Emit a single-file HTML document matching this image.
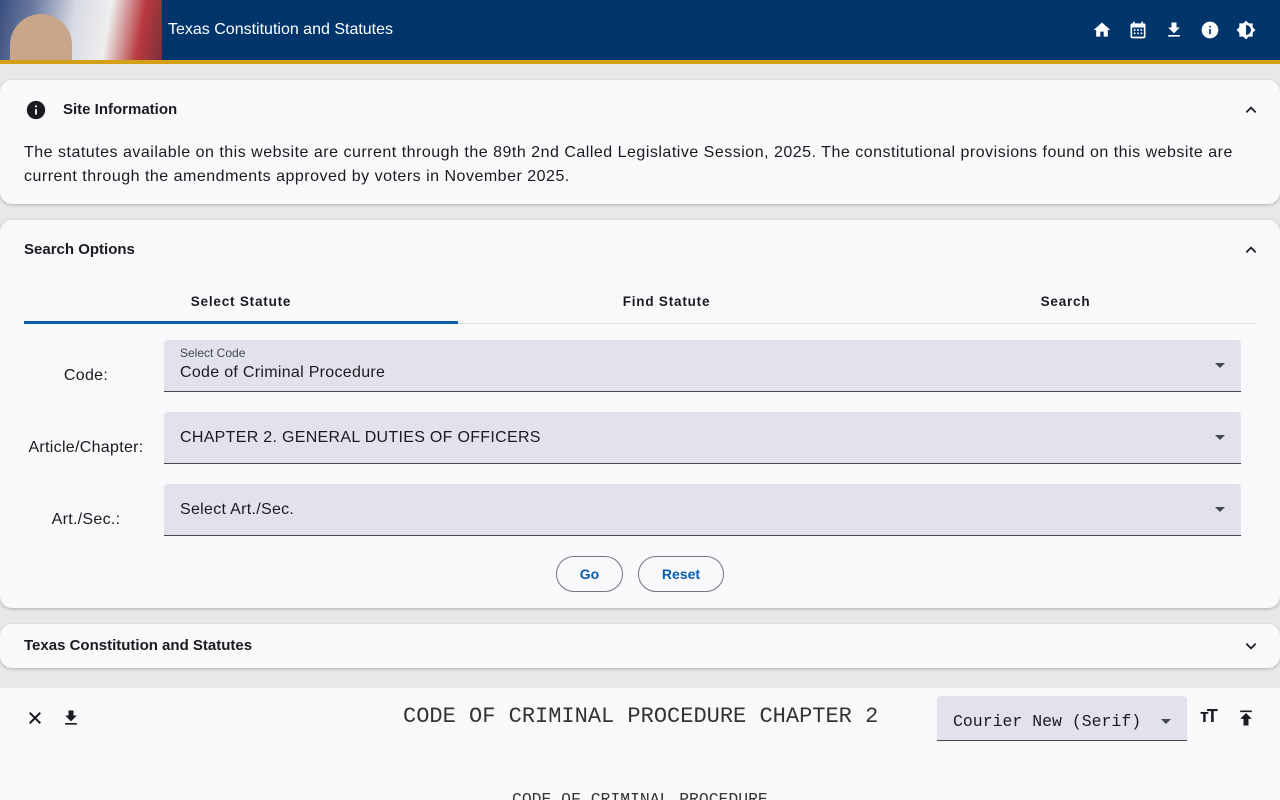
<!DOCTYPE html>
<html><head><meta charset="utf-8"><style>
*{box-sizing:border-box;margin:0;padding:0}
html,body{width:1280px;height:800px;overflow:hidden}
body{background:#e8e8ea;font-family:"Liberation Sans",sans-serif;color:#1b1b1f;position:relative}
.hdr{position:absolute;left:0;top:0;width:1280px;height:60px;background:#00356b}
.gold{position:absolute;left:0;top:60px;width:1280px;height:4px;background:#d4a017}
.logo{position:absolute;left:0;top:0;width:162px;height:60px;background:linear-gradient(100deg,#3a4f7f 0%,#6b7aa0 20%,#d9dbe4 45%,#eeeeee 65%,#b93a3f 85%,#7a2f3a 100%)}
.dome{position:absolute;left:10px;top:14px;width:62px;height:46px;background:#c9a58a;border-radius:31px 31px 0 0}
.title{position:absolute;left:168px;top:21px;color:#fff;font-size:16px}
.icons{position:absolute;top:20px;right:24px;display:flex;gap:16px}
.icons svg{width:20px;height:20px;fill:#fff}
.card{position:absolute;left:0;width:1280px;background:#f9f9fc;border-radius:12px;box-shadow:0 1px 3px rgba(0,0,0,.25)}
.h{position:absolute;font-size:15px;font-weight:bold;color:#1b1b1f}
.chev{position:absolute;right:22px;width:14px;height:14px}
.tab{position:absolute;top:294px;font-size:13.5px;font-weight:bold;letter-spacing:.8px;text-align:center}
.lbl{position:absolute;font-size:16px;text-align:center;width:164px;letter-spacing:.3px}
.sel{position:absolute;left:164px;width:1077px;height:52px;background:#e1e2ec;border-bottom:1px solid #44474f;border-radius:4px 4px 0 0}
.sel .v{position:absolute;left:16px;font-size:16px;letter-spacing:.3px}
.sel .a{position:absolute;right:16px;top:23px;border-left:5px solid transparent;border-right:5px solid transparent;border-top:5px solid #44474f}
.btn{position:absolute;top:556px;height:36px;border:1px solid #74777f;border-radius:18px;color:#0b5cad;font-weight:bold;font-size:14px;text-align:center;line-height:34px}
</style></head><body>
<div class="hdr"><div class="logo"><div class="dome"></div></div><div class="title">Texas Constitution and Statutes</div>
<div class="icons">
<svg viewBox="0 0 24 24"><path d="M10 20v-6h4v6h5v-8h3L12 3 2 12h3v8z"/></svg>
<svg viewBox="0 0 24 24"><path d="M19 4h-1V2h-2v2H8V2H6v2H5a2 2 0 0 0-2 2v14a2 2 0 0 0 2 2h14a2 2 0 0 0 2-2V6a2 2 0 0 0-2-2zm0 16H5V9h14zM7 11h2v2H7zm4 0h2v2h-2zm4 0h2v2h-2zm-8 4h2v2H7zm4 0h2v2h-2zm4 0h2v2h-2z"/></svg>
<svg viewBox="0 0 24 24"><path d="M19 9h-4V3H9v6H5l7 7zM5 18v2h14v-2z"/></svg>
<svg viewBox="0 0 24 24"><path d="M12 2a10 10 0 1 0 0 20 10 10 0 0 0 0-20zm1 15h-2v-6h2zm0-8h-2V7h2z"/></svg>
<svg viewBox="0 0 24 24"><path d="M20 8.69V4h-4.69L12 .69 8.69 4H4v4.69L.69 12 4 15.31V20h4.69L12 23.31 15.31 20H20v-4.69L23.31 12zM12 18V6a6 6 0 0 1 0 12z"/></svg>
</div></div>
<div class="gold"></div>

<div class="card" style="top:80px;height:124px">
<svg style="position:absolute;left:25px;top:19px;width:22px;height:22px" viewBox="0 0 24 24"><path fill="#1b1b1f" d="M12 2a10 10 0 1 0 0 20 10 10 0 0 0 0-20zm1 15h-2v-6h2zm0-8h-2V7h2z"/></svg>
<div class="h" style="left:63px;top:21px">Site Information</div>
<svg class="chev" style="top:23px" viewBox="0 0 24 24"><path d="M4 16l8-8 8 8" stroke="#1b1b1f" stroke-width="3" fill="none"/></svg>
<div style="position:absolute;left:24px;top:61px;width:1232px;font-size:16px;line-height:24px;letter-spacing:.5px">The statutes available on this website are current through the 89th 2nd Called Legislative Session, 2025. The constitutional provisions found on this website are current through the amendments approved by voters in November 2025.</div>
</div>

<div class="card" style="top:220px;height:388px"></div>
<div class="h" style="left:24px;top:241px">Search Options</div>
<svg class="chev" style="top:243px" viewBox="0 0 24 24"><path d="M4 16l8-8 8 8" stroke="#1b1b1f" stroke-width="3" fill="none"/></svg>
<div class="tab" style="left:24px;width:434px">Select Statute</div>
<div class="tab" style="left:458px;width:417px">Find Statute</div>
<div class="tab" style="left:875px;width:381px">Search</div>
<div style="position:absolute;left:24px;top:323px;width:1232px;height:1px;background:#dcdce0"></div>
<div style="position:absolute;left:24px;top:321px;width:434px;height:3px;background:#0b5cad"></div>
<div class="lbl" style="left:4px;top:367px">Code:</div>
<div class="sel" style="top:340px"><div style="position:absolute;left:16px;top:6px;font-size:12px;color:#44474f">Select Code</div><div class="v" style="top:24px">Code of Criminal Procedure</div><div class="a"></div></div>
<div class="lbl" style="left:4px;top:439px">Article/Chapter:</div>
<div class="sel" style="top:412px"><div class="v" style="top:17px">CHAPTER 2. GENERAL DUTIES OF OFFICERS</div><div class="a"></div></div>
<div class="lbl" style="left:4px;top:511px">Art./Sec.:</div>
<div class="sel" style="top:484px"><div class="v" style="top:17px">Select Art./Sec.</div><div class="a"></div></div>
<div class="btn" style="left:556px;width:67px">Go</div>
<div class="btn" style="left:638px;width:86px">Reset</div>

<div class="card" style="top:624px;height:44px"></div>
<div class="h" style="left:24px;top:637px">Texas Constitution and Statutes</div>
<svg class="chev" style="top:639px" viewBox="0 0 24 24"><path d="M4 8l8 8 8-8" stroke="#1b1b1f" stroke-width="3" fill="none"/></svg>

<div style="position:absolute;left:0;top:688px;width:1280px;height:112px;background:#f9f9fc"></div>
<svg style="position:absolute;left:26px;top:709px;width:18px;height:18px" viewBox="0 0 24 24"><path d="M5 5l14 14M19 5L5 19" stroke="#1b1b1f" stroke-width="2.6"/></svg>
<svg style="position:absolute;left:61px;top:708px;width:20px;height:20px" viewBox="0 0 24 24"><path fill="#1b1b1f" d="M19 9h-4V3H9v6H5l7 7zM5 18v2h14v-2z"/></svg>
<div style="position:absolute;left:403px;top:704px;font-family:'Liberation Mono',monospace;font-size:22px;color:#333">CODE OF CRIMINAL PROCEDURE CHAPTER 2</div>
<div style="position:absolute;left:937px;top:696px;width:250px;height:45px;background:#e1e2ec;border-bottom:1px solid #44474f;border-radius:4px 4px 0 0">
<div style="position:absolute;left:16px;top:16px;font-family:'Liberation Mono',monospace;font-size:16.5px">Courier New (Serif)</div>
<div style="position:absolute;right:16px;top:23px;border-left:5px solid transparent;border-right:5px solid transparent;border-top:5px solid #44474f"></div></div>
<div style="position:absolute;left:1200px;top:706px;font-weight:bold;font-size:18px;letter-spacing:-2px">тT</div>
<svg style="position:absolute;left:1236px;top:708px;width:20px;height:20px" viewBox="0 0 24 24"><path fill="#1b1b1f" d="M5 3h14v2H5zm0 10h4v8h6v-8h4l-7-7z"/></svg>
<div style="position:absolute;left:512px;top:790px;font-family:'Liberation Mono',monospace;font-size:16.4px;color:#333">CODE OF CRIMINAL PROCEDURE</div>
</body></html>
